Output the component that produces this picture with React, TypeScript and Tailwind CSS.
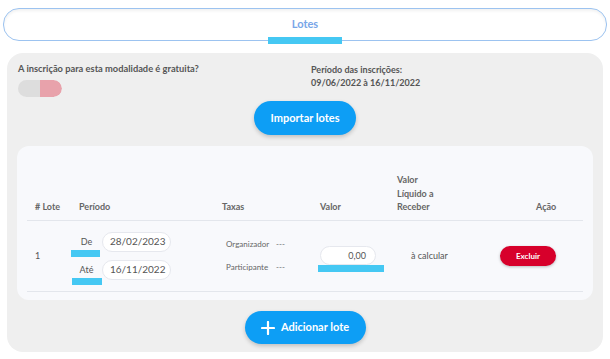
import React from "react";

const font = { fontFamily: "Lato, 'Open Sans', sans-serif" };

function DateRow({ label, value, barClass }: { label: string; value: string; barClass: string }) {
  return (
    <div className="flex items-start">
      <div className="relative w-[31px] h-[20px] flex items-center justify-center text-[9px] text-[#555]">
        {label}
        <span className={`absolute top-[18px] h-[7px] bg-[#45c8f3] ${barClass}`} />
      </div>
      <div className="w-[69px] h-[20px] rounded-full bg-white border border-[#e6e8ee] flex items-center pl-[7px] text-[10px] text-[#555]">
        {value}
      </div>
    </div>
  );
}

export default function App() {
  return (
    <div className="w-[610px] h-[359px] bg-white pt-[8px] px-[3px]" style={font}>
      <div className="relative h-[33px] rounded-[16px] border border-[#9cc3f0] shadow-[inset_0px_2px_3px_rgba(0,0,0,0.06)] flex items-center justify-center">
        <span className="text-[11px] font-bold text-[#78a6e8]">Lotes</span>
        <span className="absolute left-[264px] top-[28px] w-[74px] h-[7px] bg-[#45c8f3]" />
      </div>

      <div className="mt-[12px] mx-[4px] h-[299px] rounded-[16px] bg-[#efefef] px-[10px] pt-[10px]">
        <div className="flex">
          <div className="w-[294px] pl-[1px]">
            <p className="text-[9.3px] font-bold text-[#555] leading-[12px]">A inscrição para esta modalidade é gratuita?</p>
            <div className="mt-[5px] flex w-[44px] h-[17px] rounded-full overflow-hidden">
              <span className="w-[22px] bg-[#dddddd]" />
              <span className="w-[22px] bg-[#e8a2ab] rounded-r-full" />
            </div>
          </div>
          <div className="text-[9px] font-bold text-[#555] leading-[13px]">
            <p>Período das inscrições:</p>
            <p>09/06/2022 à 16/11/2022</p>
          </div>
        </div>

        <div className="flex justify-center mt-[4px]">
          <button className="w-[102px] h-[34px] rounded-full bg-[#0d9ef5] text-white text-[11px] font-bold shadow-[0px_2px_4px_rgba(0,0,0,0.2)]">
            Importar lotes
          </button>
        </div>

        <div className="mt-[11px] h-[154px] rounded-[12px] bg-[#f8f9fc] px-[10px] pt-[27px]">
          <div className="grid grid-cols-[44px_143px_98px_77px_101px_1fr] items-end border-b border-[#e3e6ec] pb-[6px] text-[9px] font-bold text-[#666] leading-[13.5px]">
            <div className="pl-[8px]"># Lote</div>
            <div className="pl-[8px]">Período</div>
            <div className="pl-[8px]">Taxas</div>
            <div className="pl-[8px]">Valor</div>
            <div className="pl-[8px]">
              Valor
              <br />
              Líquido a
              <br />
              Receber
            </div>
            <div className="pl-[46px]">Ação</div>
          </div>

          <div className="grid grid-cols-[44px_143px_98px_77px_101px_1fr] items-center h-[71px] border-b border-[#e3e6ec] text-[9px] text-[#555]">
            <div className="pl-[8px]">1</div>
            <div className="flex flex-col gap-[8px]">
              <DateRow label="De" value="28/02/2023" barClass="left-0 w-[29px]" />
              <DateRow label="Até" value="16/11/2022" barClass="left-[1px] w-[30px]" />
            </div>
            <div className="pl-[12px] flex flex-col gap-[11px] text-[8px] text-[#666]">
              <div className="flex">
                <span className="w-[50px]">Organizador</span>
                <span>---</span>
              </div>
              <div className="flex">
                <span className="w-[50px]">Participante</span>
                <span>---</span>
              </div>
            </div>
            <div className="relative pl-[8px]">
              <div className="w-[56px] h-[19px] rounded-full bg-white border border-[#e6e8ee] flex items-center justify-end pr-[9px] text-[9px] text-[#555]">
                0,00
              </div>
              <span className="absolute left-[6px] top-[19px] w-[66px] h-[7px] bg-[#45c8f3]" />
            </div>
            <div className="pl-[22px] text-[9px]">à calcular</div>
            <div className="pl-[10px]">
              <button className="w-[56px] h-[20px] rounded-full bg-[#d7002b] text-white text-[8px] font-bold shadow-[0px_1px_3px_rgba(0,0,0,0.25)]">
                Excluir
              </button>
            </div>
          </div>
        </div>

        <div className="flex justify-center mt-[11px]">
          <button className="w-[121px] h-[33px] rounded-full bg-[#0d9ef5] text-white text-[11px] font-bold shadow-[0px_2px_4px_rgba(0,0,0,0.2)] flex items-center justify-center gap-[6px]">
            <svg width="14" height="14" viewBox="0 0 14 14">
              <path d="M7 1v12M1 7h12" stroke="white" strokeWidth="2.2" strokeLinecap="round" />
            </svg>
            Adicionar lote
          </button>
        </div>
      </div>
    </div>
  );
}
